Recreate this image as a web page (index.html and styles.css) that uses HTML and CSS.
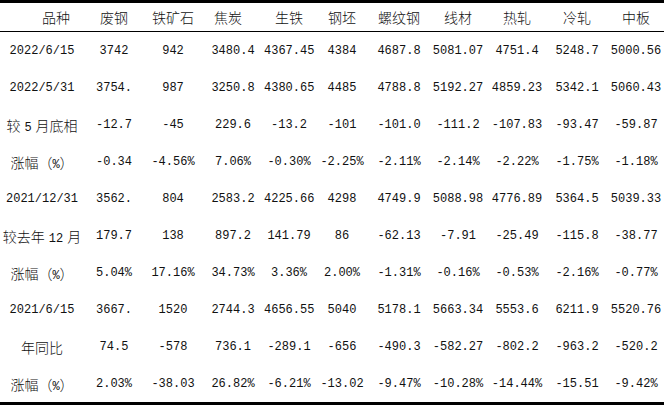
FILE: index.html
```html
<!DOCTYPE html>
<html lang="zh">
<head>
<meta charset="utf-8">
<title>钢材价格对比</title>
<link rel="stylesheet" href="styles.css">
</head>
<body>
<table class="sheet">
  <colgroup>
    <col class="w84"><col class="w60"><col class="w58"><col class="w62"><col class="w50"><col class="w56"><col class="w58"><col class="w60"><col class="w58"><col class="w62"><col class="w56">
  </colgroup>
  <thead>
    <tr>
      <th class="first">品种</th><th>废钢</th><th>铁矿石</th><th class="shift">焦炭</th><th>生铁</th><th>钢坯</th><th>螺纹钢</th><th>线材</th><th>热轧</th><th>冷轧</th><th>中板</th>
    </tr>
  </thead>
  <tbody>
    <tr><td>2022/6/15</td><td>3742</td><td>942</td><td>3480.4</td><td>4367.45</td><td>4384</td><td>4687.8</td><td>5081.07</td><td>4751.4</td><td>5248.7</td><td>5000.56</td></tr>
    <tr><td>2022/5/31</td><td>3754.</td><td>987</td><td>3250.8</td><td>4380.65</td><td>4485</td><td>4788.8</td><td>5192.27</td><td>4859.23</td><td>5342.1</td><td>5060.43</td></tr>
    <tr><td class="zh">较<span class="num">5</span>月底相</td><td>-12.7</td><td>-45</td><td>229.6</td><td>-13.2</td><td>-101</td><td>-101.0</td><td>-111.2</td><td>-107.83</td><td>-93.47</td><td>-59.87</td></tr>
    <tr><td class="zh">涨幅（<span class="mono">%</span>）</td><td>-0.34</td><td>-4.56%</td><td>7.06%</td><td>-0.30%</td><td>-2.25%</td><td>-2.11%</td><td>-2.14%</td><td>-2.22%</td><td>-1.75%</td><td>-1.18%</td></tr>
    <tr><td>2021/12/31</td><td>3562.</td><td>804</td><td>2583.2</td><td>4225.66</td><td>4298</td><td>4749.9</td><td>5088.98</td><td>4776.89</td><td>5364.5</td><td>5039.33</td></tr>
    <tr><td class="zh">较去年<span class="num">12</span>月</td><td>179.7</td><td>138</td><td>897.2</td><td>141.79</td><td>86</td><td>-62.13</td><td>-7.91</td><td>-25.49</td><td>-115.8</td><td>-38.77</td></tr>
    <tr><td class="zh">涨幅（<span class="mono">%</span>）</td><td>5.04%</td><td>17.16%</td><td>34.73%</td><td>3.36%</td><td>2.00%</td><td>-1.31%</td><td>-0.16%</td><td>-0.53%</td><td>-2.16%</td><td>-0.77%</td></tr>
    <tr><td>2021/6/15</td><td>3667.</td><td>1520</td><td>2744.3</td><td>4656.55</td><td>5040</td><td>5178.1</td><td>5663.34</td><td>5553.6</td><td>6211.9</td><td>5520.76</td></tr>
    <tr><td class="zh">年同比</td><td>74.5</td><td>-578</td><td>736.1</td><td>-289.1</td><td>-656</td><td>-490.3</td><td>-582.27</td><td>-802.2</td><td>-963.2</td><td>-520.2</td></tr>
    <tr class="last"><td class="zh">涨幅（<span class="mono">%</span>）</td><td>2.03%</td><td>-38.03</td><td>26.82%</td><td>-6.21%</td><td>-13.02</td><td>-9.47%</td><td>-10.28%</td><td>-14.44%</td><td>-15.51</td><td>-9.42%</td></tr>
  </tbody>
</table>
</body>
</html>
```
FILE: styles.css
```css
html, body {
  margin: 0;
  padding: 0;
  background: #ffffff;
}

.sheet {
  border-collapse: separate;
  border-spacing: 0;
  table-layout: fixed;
  width: 664px;
  color: #111111;
  font-family: "Liberation Mono", "Noto Sans CJK SC", monospace;
  font-size: 12px;
}

.w84 { width: 84px; }
.w60 { width: 60px; }
.w58 { width: 58px; }
.w62 { width: 62px; }
.w50 { width: 50px; }
.w56 { width: 56px; }

.sheet th {
  height: 28px;
  padding: 0;
  border-top: 3px solid #000000;
  border-bottom: 1px solid #000000;
  font-family: "Noto Sans CJK SC", sans-serif;
  font-size: 14px;
  font-weight: 300;
  text-align: center;
  white-space: nowrap;
  vertical-align: middle;
}

.sheet th.first {
  padding-left: 28px;
}

.sheet th.shift {
  padding-right: 10px;
}

.sheet td {
  height: 37px;
  padding: 0;
  text-align: center;
  white-space: nowrap;
  vertical-align: middle;
}

.sheet tr.last td {
  border-bottom: 3px solid #000000;
}

.sheet td.zh {
  font-family: "Noto Sans CJK SC", sans-serif;
  font-size: 14px;
  font-weight: 300;
}

.mono {
  font-family: "Liberation Mono", monospace;
  font-size: 12px;
}

.num {
  font-family: "Liberation Mono", monospace;
  font-size: 12px;
  margin: 0 4px;
}
```
